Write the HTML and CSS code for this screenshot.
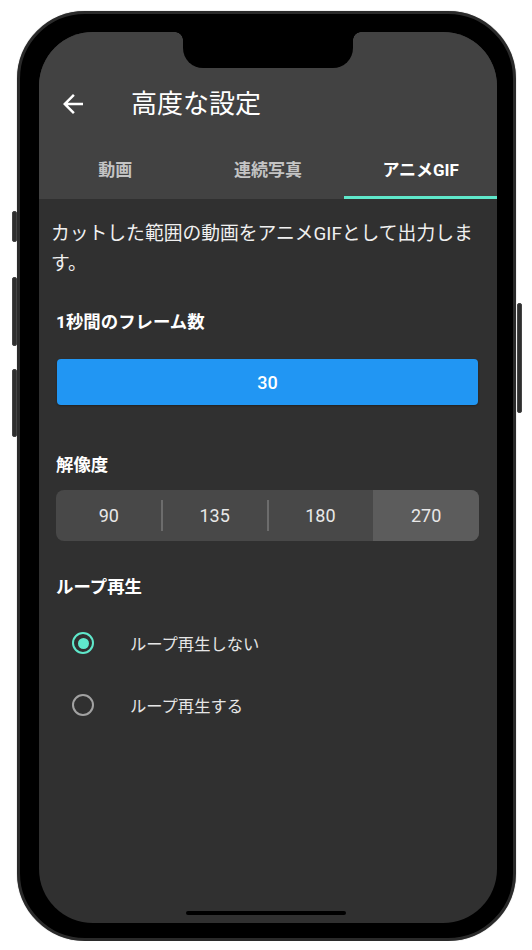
FILE: index.html
```html
<!DOCTYPE html>
<html lang="ja">
<head>
    <meta charset="UTF-8">
    <title>高度な設定</title>
    <link rel="stylesheet" href="styles.css">
</head>
<body>
    <div class="phone">
        <span class="side-btn mute"></span>
        <span class="side-btn vol-up"></span>
        <span class="side-btn vol-down"></span>
        <span class="side-btn power"></span>

        <div class="screen">
            <div class="notch"></div>

            <header class="appbar">
                <div class="statusbar"></div>
                <div class="toolbar">
                    <svg class="back" viewBox="0 0 24 24" width="30" height="30">
                        <path d="M20 11H7.83l5.59-5.59L12 4l-8 8 8 8 1.41-1.41L7.83 13H20v-2z" fill="#fff"/>
                    </svg>
                    <h1>高度な設定</h1>
                </div>
                <nav class="tabs">
                    <div class="tab">動画</div>
                    <div class="tab">連続写真</div>
                    <div class="tab active">アニメGIF</div>
                </nav>
            </header>

            <main class="content">
                <p class="desc">カットした範囲の動画をアニメGIFとして出力します。</p>

                <section class="group">
                    <h2>1秒間のフレーム数</h2>
                    <div class="fps-btn">30</div>
                </section>

                <section class="group">
                    <h2 class="res-title">解像度</h2>
                    <div class="segments">
                        <div class="seg">90</div>
                        <div class="seg">135</div>
                        <div class="seg">180</div>
                        <div class="seg selected">270</div>
                    </div>
                </section>

                <section class="group">
                    <h2 class="loop-title">ループ再生</h2>
                    <div class="radios">
                        <div class="radio-row">
                            <span class="radio checked"></span>
                            <span class="radio-label">ループ再生しない</span>
                        </div>
                        <div class="radio-row">
                            <span class="radio"></span>
                            <span class="radio-label">ループ再生する</span>
                        </div>
                    </div>
                </section>
            </main>

            <div class="home-indicator"></div>
        </div>
    </div>
</body>
</html>
```

FILE: styles.css
```css
body {
    margin: 0;
    background-color: #fff;
    font-family: Roboto, "Noto Sans CJK JP", sans-serif;
    color: #fff;
}
.phone {
    position: relative;
    box-sizing: border-box;
    width: 499px;
    height: 930px;
    margin: 11px 0 0 17px;
    padding: 18px 16px 15px 19px;
    background-color: #000;
    border: 3px solid #2a2a2a;
    border-radius: 68px;
    box-shadow: 0 0 1px rgba(0, 0, 0, 0.6);
}
.side-btn {
    position: absolute;
    width: 5px;
    background-color: #2e2e2e;
    border: 1px solid #444;
    box-sizing: border-box;
    border-radius: 2px;
}
.mute { left: -8px; top: 197px; height: 31px; }
.vol-up { left: -8px; top: 263px; height: 69px; }
.vol-down { left: -8px; top: 355px; height: 68px; }
.power { right: -9px; top: 289px; height: 110px; }

.screen {
    position: relative;
    height: 100%;
    overflow: hidden;
    border-radius: 54px;
    background-color: #303030;
    display: flex;
    flex-direction: column;
}
.notch {
    position: absolute;
    top: 0;
    left: 144px;
    width: 170px;
    height: 36px;
    background-color: #000;
    border-radius: 0 0 20px 20px;
}
.notch::before,
.notch::after {
    content: "";
    position: absolute;
    top: 0;
    width: 8px;
    height: 8px;
}
.notch::before {
    left: -8px;
    background: radial-gradient(circle at 0 100%, transparent 7.5px, #000 8px);
}
.notch::after {
    right: -8px;
    background: radial-gradient(circle at 100% 100%, transparent 7.5px, #000 8px);
}

.appbar {
    background-color: #424242;
}
.statusbar {
    height: 40px;
}
.toolbar {
    height: 64px;
    display: flex;
    align-items: center;
    padding-left: 19px;
}
.back {
    display: block;
}
.toolbar h1 {
    margin: 0 0 0 43px;
    font-size: 26px;
    font-weight: 400;
    line-height: 1;
}
.tabs {
    display: grid;
    grid-template-columns: 1fr 1fr 1fr;
    height: 63px;
}
.tab {
    display: flex;
    align-items: center;
    justify-content: center;
    padding-top: 4px;
    font-size: 17px;
    font-weight: 700;
    color: #c4c4c4;
    border-bottom: 3px solid transparent;
}
.tab.active {
    color: #fff;
    border-bottom-color: #5fe8cb;
}

.content {
    padding-top: 20px;
}
.desc {
    margin: 0;
    padding: 0 12px;
    font-size: 18.8px;
    line-height: 30px;
    color: #f0f0f0;
}
.group {
    padding: 0 18px 0 17px;
}
.group h2 {
    margin: 31px 0 0;
    font-size: 17.4px;
    font-weight: 700;
    line-height: 24px;
}
.group .res-title {
    margin-top: 48px;
}
.group .loop-title {
    margin-top: 34px;
}
.fps-btn {
    margin: 25px 1px 0;
    height: 46px;
    border-radius: 4px;
    background-color: #2196f3;
    display: flex;
    align-items: center;
    justify-content: center;
    font-size: 18px;
    font-weight: 500;
    box-shadow: 0 1px 2px rgba(0, 0, 0, 0.3);
}
.segments {
    margin-top: 13px;
    height: 51px;
    display: grid;
    grid-template-columns: repeat(4, 1fr);
    border-radius: 8px;
    overflow: hidden;
    background-color: #484848;
}
.seg {
    position: relative;
    display: flex;
    align-items: center;
    justify-content: center;
    font-size: 18px;
    color: #e8e8e8;
}
.seg + .seg::before {
    content: "";
    position: absolute;
    left: -1px;
    top: 10px;
    bottom: 10px;
    width: 2px;
    background-color: #6c6c6c;
}
.seg.selected {
    background-color: #5c5c5c;
}
.seg.selected::before {
    display: none;
}
.radios {
    margin-top: 13px;
}
.radio-row {
    height: 62px;
    display: flex;
    align-items: center;
    padding-left: 16px;
}
.radio {
    box-sizing: border-box;
    width: 22px;
    height: 22px;
    border: 2.5px solid #a2a2a2;
    border-radius: 50%;
    display: flex;
    align-items: center;
    justify-content: center;
}
.radio.checked {
    border-color: #5fe8cb;
}
.radio.checked::after {
    content: "";
    width: 11px;
    height: 11px;
    border-radius: 50%;
    background-color: #5fe8cb;
}
.radio-label {
    margin-left: 36px;
    font-size: 16.3px;
    color: #e6e6e6;
}
.home-indicator {
    position: absolute;
    bottom: 8px;
    left: 147px;
    width: 160px;
    height: 4px;
    border-radius: 2px;
    background-color: #000;
}
```
